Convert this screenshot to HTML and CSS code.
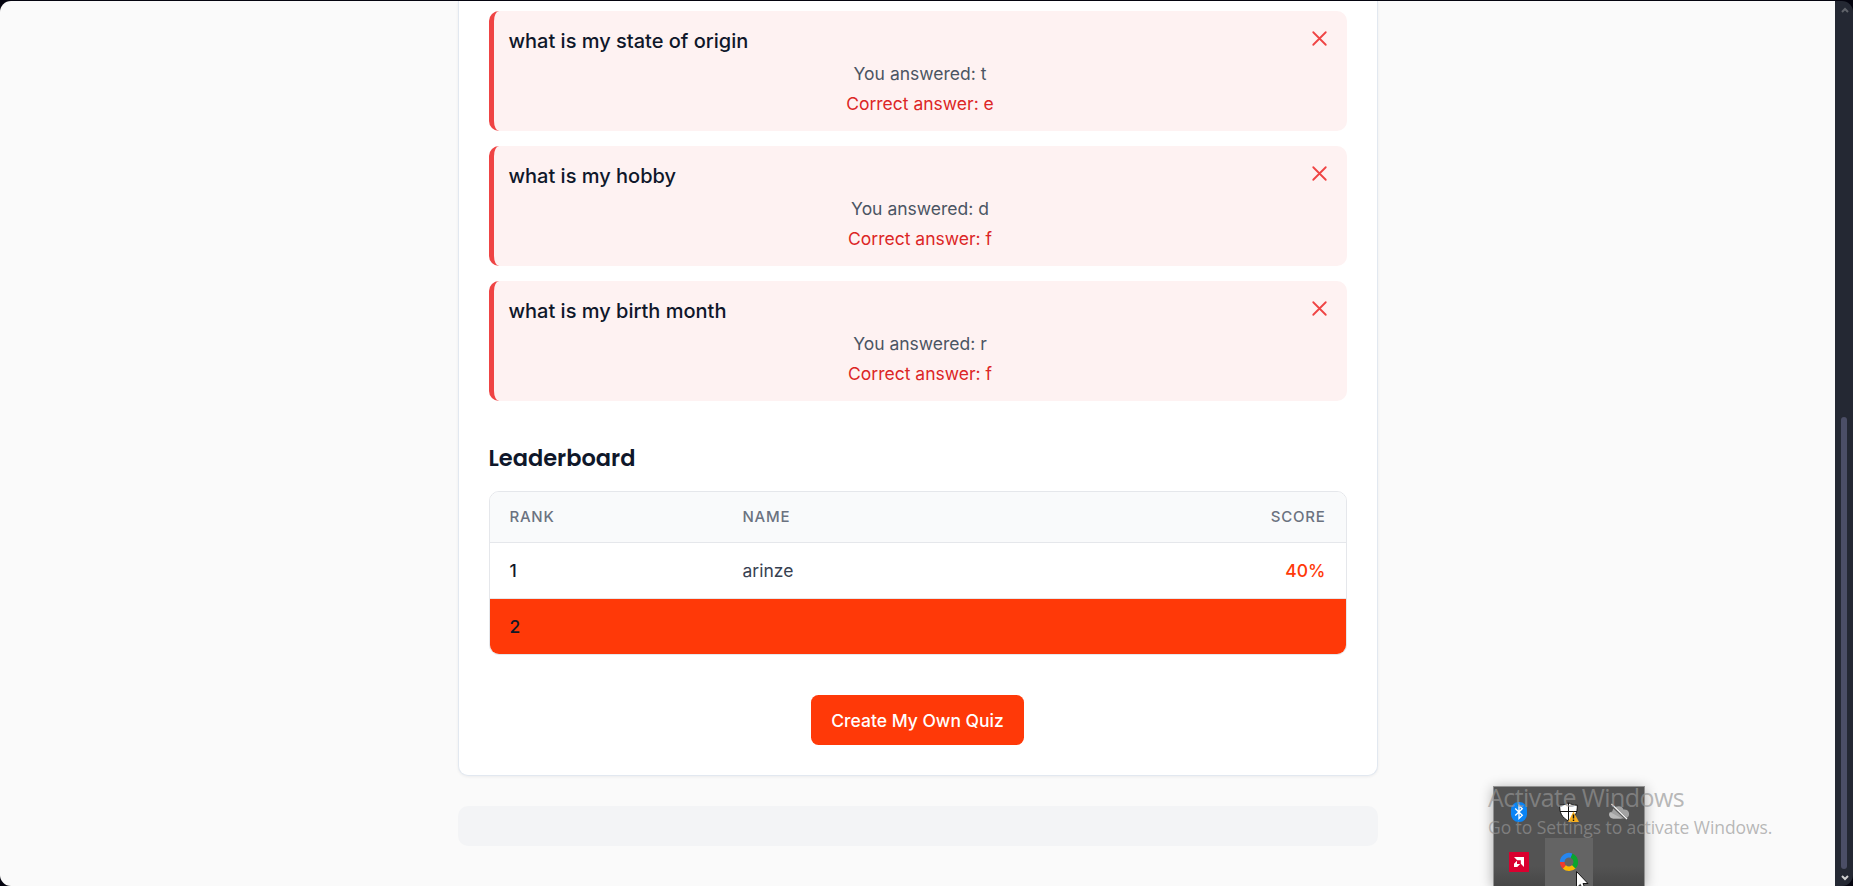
FILE: index.html
```html
<!DOCTYPE html>
<html lang="en">
<head>
<meta charset="utf-8">
<title>Quiz Results</title>
<link rel="stylesheet" href="styles.css">
</head>
<body>
<div class="window">
  <main class="page">
    <section class="results">
      <div class="answers">
        <article class="answer">
          <div class="answer-head"><h3 class="question">what is my state of origin</h3><svg class="cross" viewBox="0 0 24 24"><path d="M6 6l12 12M18 6L6 18"/></svg></div>
          <p class="given">You answered: t</p>
          <p class="correct">Correct answer: e</p>
        </article>
        <article class="answer">
          <div class="answer-head"><h3 class="question">what is my hobby</h3><svg class="cross" viewBox="0 0 24 24"><path d="M6 6l12 12M18 6L6 18"/></svg></div>
          <p class="given">You answered: d</p>
          <p class="correct">Correct answer: f</p>
        </article>
        <article class="answer">
          <div class="answer-head"><h3 class="question">what is my birth month</h3><svg class="cross" viewBox="0 0 24 24"><path d="M6 6l12 12M18 6L6 18"/></svg></div>
          <p class="given">You answered: r</p>
          <p class="correct">Correct answer: f</p>
        </article>
      </div>
      <h2 class="board-title">Leaderboard</h2>
      <div class="board">
        <div class="row row-head"><span>RANK</span><span>NAME</span><span class="score">SCORE</span></div>
        <div class="row"><span class="rank">1</span><span class="name">arinze</span><span class="score">40%</span></div>
        <div class="row row-current"><span class="rank">2</span><span></span><span></span></div>
      </div>
      <button class="create">Create My Own Quiz</button>
    </section>
    <div class="ad"></div>
  </main>
  <aside class="scrollbar">
    <svg class="arrow arrow-up" viewBox="0 0 8 6"><path d="M1 5L4 2L7 5"/></svg>
    <div class="track"><div class="thumb"></div></div>
    <svg class="arrow arrow-down" viewBox="0 0 8 6"><path d="M1 1L4 4L7 1"/></svg>
  </aside>
</div>

<div class="tray">
  <div class="cell"><svg width="16" height="20" viewBox="0 0 16 20"><rect width="16" height="20" rx="7.5" fill="#0a84f5"/><path d="M4.2 6.5L11.3 13.3L8 16.5V3.5L11.3 6.7L4.2 13.5" fill="none" stroke="#fff" stroke-width="1.3"/></svg></div>
  <div class="cell"><svg width="20" height="20" viewBox="0 0 20 20"><path d="M9.5 0.6C7.5 2.3 4 3.2 0.7 3.2C0.4 11 3 15.500 9.5 19C16 15.5 18.600 11 18.3 3.2C15 3.2 11.5 2.3 9.5 0.6Z" fill="#fff" stroke="#111" stroke-width="1"/><path d="M9.5 1V18.5M1 9.5H18" stroke="#111" stroke-width="1"/><path d="M14.5 9.5L20 20H9Z" fill="#f8ae1c"/><path d="M14.5 12.5V16.5M14.5 17.5V19" stroke="#111" stroke-width="1.4"/></svg></div>
  <div class="cell"><svg width="20" height="18" viewBox="0 0 20 18"><path d="M4 15.5A4 4 0 0 1 3.5 8A5 5 0 0 1 8 3.5A5.5 5.5 0 0 1 14.5 6.5A4.6 4.6 0 0 1 16.5 15.5Z" fill="#a2a2a2"/><path d="M4 15.5A4 4 0 0 1 1 9L13 15.5Z" fill="#bababa"/><path d="M2.5 2L18 16.5" stroke="#555" stroke-width="2.4"/><path d="M2.5 1L18 16" stroke="#f4f4f4" stroke-width="1.3"/></svg></div>
  <div class="cell"><svg width="20" height="20" viewBox="0 0 20 20"><rect width="20" height="20" fill="#d9002f"/><path d="M5 5H15V15L11.8 11.8V8.2H8.2Z" fill="#fff"/><path d="M8 8.8L5 11.8V15H8.2L11.2 12H8Z" fill="#fff"/></svg></div>
  <div class="cell cell-hover"><svg width="20" height="20" viewBox="0 0 20 20" fill="none" stroke-width="4.6"><path d="M5.6 15.2A6.8 6.8 0 0 1 3.2 9.5" stroke="#f03b2c"/><path d="M15 14.6A6.8 6.8 0 0 1 5.4 15" stroke="#fdb900"/><path d="M12.3 3.6A6.8 6.8 0 0 1 14.8 14.8" stroke="#0aa52e"/><path d="M3.2 10A6.8 6.8 0 0 1 12.5 3.7" stroke="#2686ee"/></svg></div>
  <div class="cell"></div>
</div>
<div class="watermark">
  <div class="wm-title">Activate Windows</div>
  <div class="wm-sub">Go to Settings to activate Windows.</div>
</div>
<svg class="cursor" viewBox="0 0 13 20"><path d="M0.5 0.5V17L4.3 13.5L7 19.5L9.5 18.4L7 12.5H12Z"/></svg>
</body>
</html>
```
FILE: styles.css
```css
* { box-sizing: border-box; }
body {
  margin: 0;
  height: 886px;
  overflow: hidden;
  position: relative;
  background: #04040f;
  font-family: Inter, "Liberation Sans", sans-serif;
}
h2, h3, p { margin: 0; }

.window {
  display: flex;
  height: 885px;
  margin-top: 1px;
  border-radius: 11px;
  overflow: hidden;
}
.page {
  flex: 1;
  display: flex;
  flex-direction: column;
  align-items: center;
  gap: 30px;
  background: #fafafa;
}

/* Results card, scrolled so its top edge is out of view */
.results {
  width: 920px;
  height: 775px;
  padding: 10px 30px 30px;
  display: flex;
  flex-direction: column;
  background: #fff;
  border: 1px solid #e2e8f0;
  border-top: 0;
  border-radius: 0 0 10px 10px;
  box-shadow: 0 1px 3px rgba(15, 23, 42, .06);
}
.answers { display: grid; gap: 15px; }
.answer {
  height: 120px;
  padding: 15px;
  border-left: 5px solid #ef4444;
  border-radius: 10px;
  background: #fef2f2;
}
.answer-head { display: flex; justify-content: space-between; height: 33px; }
.question {
  color: #0f172a;
  font-size: 20px;
  font-weight: 500;
  line-height: 30px;
}
.cross {
  width: 25px;
  height: 25px;
  fill: none;
  stroke: #ef4444;
  stroke-width: 1.75;
  stroke-linecap: round;
}
.given, .correct {
  text-align: center;
  font-size: 17.5px;
  line-height: 30px;
}
.given { color: #4b5563; }
.correct { color: #dc2626; }

.board-title {
  margin-top: 39px;
  height: 36px;
  color: #0f172a;
  font-family: Poppins, Inter, sans-serif;
  font-size: 22.5px;
  font-weight: 600;
  line-height: 36px;
}
.board {
  margin-top: 15px;
  border: 1px solid #e5e7eb;
  border-radius: 10px;
  overflow: hidden;
}
.row {
  display: grid;
  grid-template-columns: 233px 1fr 120px;
  align-items: center;
  height: 56px;
  padding: 0 20px;
  border-bottom: 1px solid #e5e7eb;
  font-size: 17.5px;
}
.row-head {
  height: 51px;
  padding-bottom: 2px;
  background: #f9fafb;
  color: #6b7280;
  font-size: 15px;
  font-weight: 500;
  letter-spacing: .75px;
}
.row-current { height: 55px; border-bottom: 0; background: #ff3908; }
.rank { color: #111827; font-weight: 500; }
.name { color: #374151; }
.score { text-align: right; }
.row:not(.row-head) .score { color: #ff3908; font-weight: 500; }

.create {
  align-self: center;
  width: 213px;
  height: 50px;
  margin-top: 40px;
  border: 0;
  border-radius: 7.5px;
  background: #ff3908;
  color: #fff;
  font: 500 17.5px Inter, sans-serif;
  white-space: nowrap;
  padding: 0;
}
.ad { width: 920px; height: 40px; border-radius: 10px; background: #f3f4f6; }

.scrollbar {
  width: 18px;
  display: flex;
  flex-direction: column;
  align-items: center;
  background: #242833;
}
.arrow { width: 8px; height: 6px; margin: 6px 0 0 1px; fill: none; stroke: #60636a; stroke-width: 2; }
.arrow-down { margin: 6px 0 5px 1px; stroke: #d0d0d0; }
.track { flex: 1; display: flex; align-items: flex-end; }
.thumb { width: 6px; height: 452px; border-radius: 3px; background: #4b4e66; }

/* System tray flyout floating over the page */
.tray {
  position: absolute;
  left: 1493px;
  top: 786px;
  width: 152px;
  height: 100px;
  padding: 1px 1px 0;
  display: grid;
  grid-template-columns: repeat(3, 48px);
  grid-auto-rows: 48px;
  gap: 2px;
  justify-content: start;
  border: 1px solid #929292;
  border-bottom: 0;
  background: linear-gradient(#535353 80%, #474747);
  box-shadow: 0 2px 12px rgba(0, 0, 0, .32);
}
.cell { display: grid; place-items: center; }
.cell-hover { background: #646464; }

.watermark {
  position: absolute;
  left: 1488px;
  top: 779px;
  color: rgba(150, 150, 150, .68);
  font-family: "Segoe UI", "Open Sans", sans-serif;
  white-space: nowrap;
}
.wm-title { font-size: 25px; line-height: 36px; letter-spacing: -.56px; }
.wm-sub { font-size: 17.5px; line-height: 24px; letter-spacing: -.07px; }

.cursor {
  position: absolute;
  left: 1576px;
  top: 871px;
  width: 13px;
  height: 20px;
  fill: #fff;
  stroke: #161616;
}
```
